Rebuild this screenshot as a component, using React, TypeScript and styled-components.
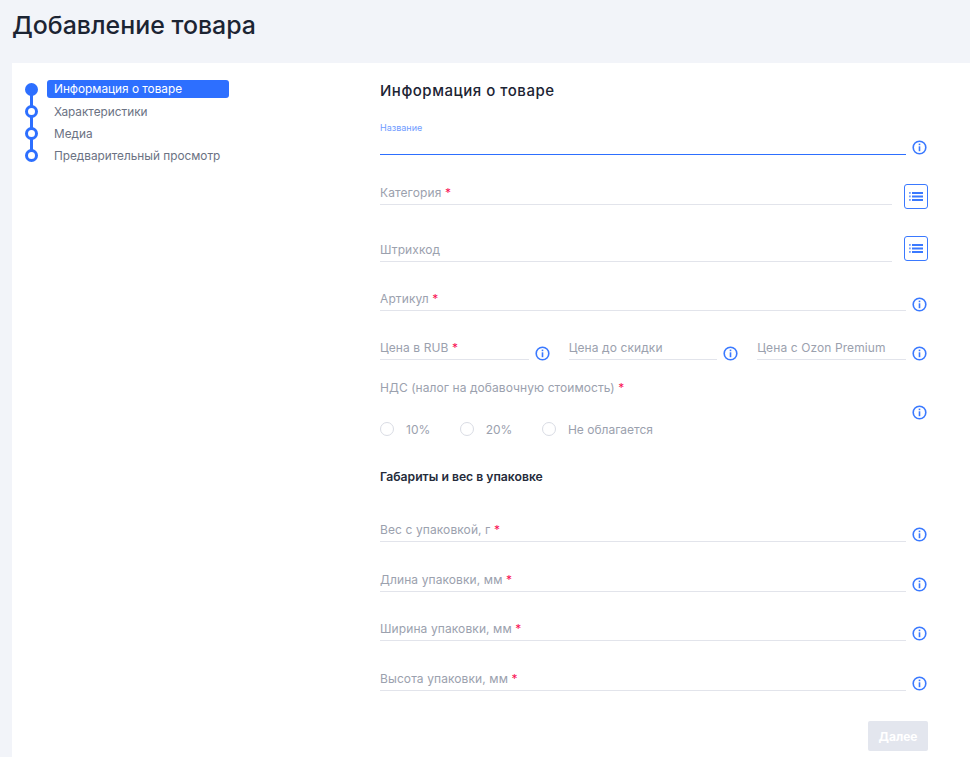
import styled, { createGlobalStyle } from "styled-components"

const Blue = "#2d6fff"
const IconBlue = "#3a79ff"
const Heading = "#1c2433"
const Muted = "#9ba1ae"
const Line = "#e2e4eb"

const Global = createGlobalStyle`
    html, body {
        margin: 0;
        padding: 0;
        background: #f2f4f9;
        font-family: Inter, "Liberation Sans", sans-serif;
    }
    * {
        box-sizing: border-box;
    }
`

const steps = ["Информация о товаре", "Характеристики", "Медиа", "Предварительный просмотр"]

function InfoIcon({ low }: { low?: boolean }) {
    return (
        <InfoWrap $low={low}>
            <svg width="15" height="15" viewBox="0 0 15 15" fill="none">
                <circle cx="7.5" cy="7.5" r="6.3" stroke={IconBlue} strokeWidth="1.6" />
                <rect x="6.7" y="3.6" width="1.6" height="1.6" fill={IconBlue} />
                <rect x="6.7" y="6.3" width="1.6" height="4.9" fill={IconBlue} />
            </svg>
        </InfoWrap>
    )
}

function ListButton({ drop }: { drop: number }) {
    return (
        <ListBtn type="button" $drop={drop}>
            <svg width="14" height="9" viewBox="0 0 14 9" fill={IconBlue}>
                <rect x="0" y="0" width="1.8" height="1.8" opacity="0.7" />
                <rect x="0" y="3.5" width="1.8" height="1.8" opacity="0.7" />
                <rect x="0" y="7" width="1.8" height="1.8" opacity="0.7" />
                <rect x="3" y="0" width="11" height="2" />
                <rect x="3" y="3.5" width="11" height="2" />
                <rect x="3" y="7" width="11" height="2" />
            </svg>
        </ListBtn>
    )
}

function Label({ text, required }: { text: string; required?: boolean }) {
    return (
        <FieldLabel>
            {text}
            {required && <Star> *</Star>}
        </FieldLabel>
    )
}

function InfoField({ label, top, low }: { label: string; top: number; low?: boolean }) {
    return (
        <InfoRow $top={top}>
            <Field>
                <Label text={label} required />
            </Field>
            <InfoIcon low={low} />
        </InfoRow>
    )
}

export default function App() {
    return (
        <>
            <Global />
            <Title>Добавление товара</Title>
            <Panel>
                <Sidebar>
                    <Stepper>
                        {steps.map((step, i) => (
                            <Step key={step}>
                                <Dot $active={i === 0} $last={i === steps.length - 1} />
                                <StepName $active={i === 0}>{step}</StepName>
                            </Step>
                        ))}
                    </Stepper>
                </Sidebar>
                <Form>
                    <FormTitle>Информация о товаре</FormTitle>
                    <InfoRow $top={25}>
                        <Field $focused>
                            <FloatLabel>Название</FloatLabel>
                        </Field>
                        <InfoIcon />
                    </InfoRow>
                    <WideRow $top={20}>
                        <Field>
                            <Label text="Категория" required />
                        </Field>
                        <ListButton drop={-4} />
                    </WideRow>
                    <WideRow $top={27}>
                        <Field>
                            <Label text="Штрихкод" />
                        </Field>
                        <ListButton drop={1} />
                    </WideRow>
                    <InfoField label="Артикул" top={19} low />
                    <PriceRow>
                        <PriceGroup>
                            <Field>
                                <Label text="Цена в RUB" required />
                            </Field>
                            <InfoIcon low />
                        </PriceGroup>
                        <PriceGroup>
                            <Field>
                                <Label text="Цена до скидки" />
                            </Field>
                            <InfoIcon low />
                        </PriceGroup>
                        <PriceGroup>
                            <Field>
                                <Label text="Цена с Ozon Premium" />
                            </Field>
                            <InfoIcon low />
                        </PriceGroup>
                    </PriceRow>
                    <TaxBlock>
                        <TaxColumn>
                            <TaxLabel>
                                НДС (налог на добавочную стоимость)<Star> *</Star>
                            </TaxLabel>
                            <Radios>
                                {["10%", "20%", "Не облагается"].map((r) => (
                                    <Radio key={r}>
                                        <Circle />
                                        {r}
                                    </Radio>
                                ))}
                            </Radios>
                        </TaxColumn>
                        <InfoIcon />
                    </TaxBlock>
                    <Section>Габариты и вес в упаковке</Section>
                    <InfoField label="Вес с упаковкой, г" top={28} />
                    <InfoField label="Длина упаковки, мм" top={20} />
                    <InfoField label="Ширина упаковки, мм" top={19} />
                    <InfoField label="Высота упаковки, мм" top={20} />
                    <Footer>
                        <NextButton type="button">Далее</NextButton>
                    </Footer>
                </Form>
            </Panel>
        </>
    )
}

const Title = styled.h1`
    margin: 0;
    height: 63px;
    padding: 8px 0 0 12px;
    font-size: 24.9px;
    line-height: 34px;
    font-weight: 500;
    color: ${Heading};
`

const Panel = styled.main`
    margin-left: 12px;
    height: 694px;
    background: #fff;
    display: flex;
`

const Sidebar = styled.aside`
    width: 368px;
    padding: 17px 0 0 13px;
`

const Stepper = styled.ol`
    margin: 0;
    padding: 0;
    list-style: none;
    display: flex;
    flex-direction: column;
    gap: 4px;
`

const Step = styled.li`
    display: flex;
    align-items: center;
    gap: 9px;
    height: 18px;
`

const Dot = styled.span<{ $active: boolean; $last: boolean }>`
    position: relative;
    flex: none;
    width: 13px;
    height: 13px;
    border-radius: 50%;
    border: 3px solid ${Blue};
    background: ${(p) => (p.$active ? Blue : "#fff")};

    &::after {
        content: "";
        display: ${(p) => (p.$last ? "none" : "block")};
        position: absolute;
        left: 50%;
        top: 9px;
        width: 3px;
        height: 12px;
        margin-left: -1.5px;
        background: ${Blue};
    }
`

const StepName = styled.span<{ $active: boolean }>`
    width: 182px;
    height: 18px;
    padding-left: 7px;
    border-radius: 3px;
    font-size: 11.8px;
    line-height: ${(p) => (p.$active ? "18px" : "20px")};
    color: ${(p) => (p.$active ? "#fff" : "#6b7283")};
    background: ${(p) => (p.$active ? Blue : "transparent")};
`

const Form = styled.form`
    width: 548px;
    padding-top: 19px;
    display: flex;
    flex-direction: column;
`

const FormTitle = styled.h2`
    margin: 0;
    font-size: 15px;
    line-height: 18px;
    font-weight: 500;
    letter-spacing: 0.52px;
    color: ${Heading};
`

const Row = styled.div<{ $top: number }>`
    display: flex;
    align-items: flex-end;
    margin-top: ${(p) => p.$top}px;
`

const InfoRow = styled(Row)`
    gap: 6px;
    padding-right: 1px;
`

const WideRow = styled(Row)`
    gap: 12px;
`

const PriceRow = styled.div`
    display: flex;
    gap: 19px;
    padding-right: 1px;
    margin-top: 19px;
`

const PriceGroup = styled.div`
    flex: 1;
    display: flex;
    align-items: flex-end;
    gap: 6px;
`

const Field = styled.div<{ $focused?: boolean }>`
    position: relative;
    flex: 1;
    height: 30px;
    display: flex;
    align-items: flex-end;
    padding-bottom: 3px;
    border-bottom: 1px solid ${(p) => (p.$focused ? Blue : Line)};
`

const FieldLabel = styled.span`
    font-size: 12px;
    line-height: 16px;
    letter-spacing: 0.1px;
    color: ${Muted};
`

const FloatLabel = styled.span`
    position: absolute;
    left: 0;
    top: -3px;
    font-size: 9px;
    line-height: 12px;
    color: #6f9bff;
`

const Star = styled.span`
    color: #f91155;
`

const InfoWrap = styled.span<{ $low?: boolean }>`
    flex: none;
    display: flex;
    width: 15px;
    height: 15px;
    margin-bottom: ${(p) => (p.$low ? "-1px" : "0")};
`

const ListBtn = styled.button<{ $drop: number }>`
    flex: none;
    width: 24px;
    height: 25px;
    margin-bottom: ${(p) => p.$drop}px;
    padding: 0;
    display: flex;
    align-items: center;
    justify-content: center;
    background: #fff;
    border: 1px solid ${IconBlue};
    border-radius: 3px;
`

const TaxBlock = styled.div`
    display: flex;
    align-items: center;
    justify-content: space-between;
    height: 64px;
    margin-top: 20px;
    padding-right: 1px;
`

const TaxColumn = styled.div`
    height: 64px;
    padding-top: 1px;
`

const TaxLabel = styled.div`
    font-size: 12px;
    line-height: 14px;
    letter-spacing: 0.07px;
    color: ${Muted};
`

const Radios = styled.div`
    display: flex;
    gap: 29.5px;
    margin-top: 27px;
`

const Radio = styled.label`
    display: flex;
    align-items: center;
    gap: 12px;
    height: 14px;
    font-size: 12px;
    color: ${Muted};
`

const Circle = styled.span`
    width: 14px;
    height: 14px;
    border: 1px solid #d9dce4;
    border-radius: 50%;
`

const Section = styled.h3`
    margin: 26px 0 0;
    font-size: 12.2px;
    line-height: 14px;
    font-weight: 600;
    color: #252b3a;
`

const Footer = styled.div`
    display: flex;
    justify-content: flex-end;
    margin-top: 30px;
`

const NextButton = styled.button`
    width: 60px;
    height: 30px;
    border: 0;
    border-radius: 2px;
    background: #e3e6ee;
    color: #fff;
    font-family: inherit;
    font-size: 12px;
    font-weight: 700;
`
